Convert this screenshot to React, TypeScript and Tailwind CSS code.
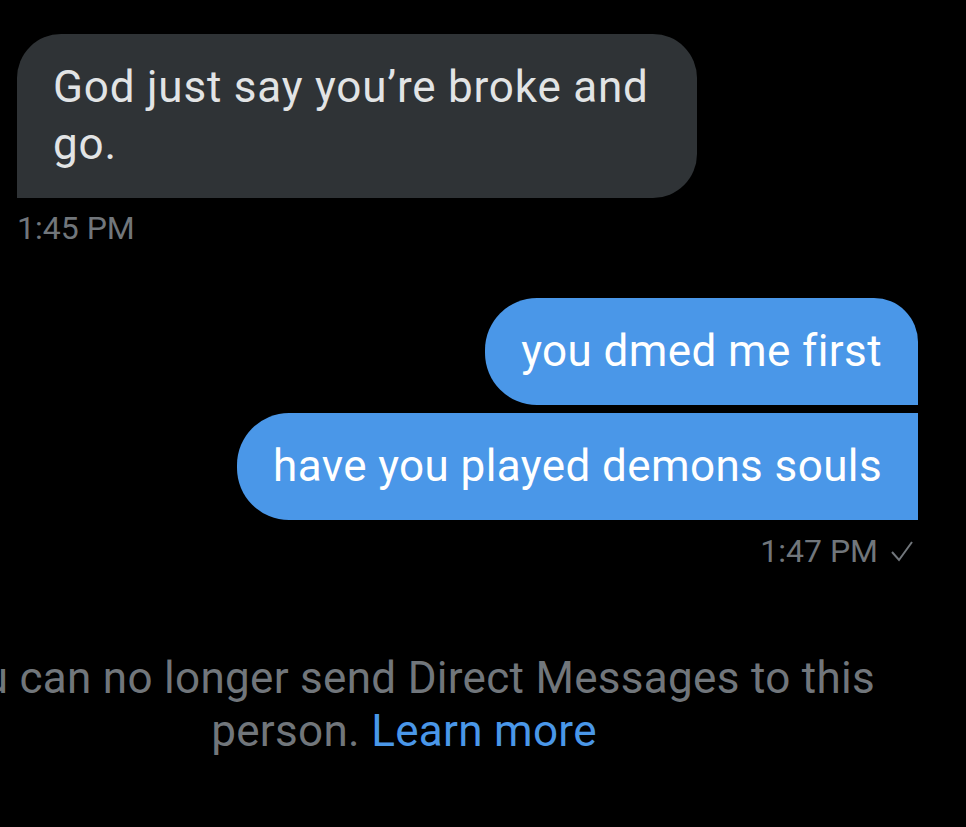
import React from "react";

export default function App() {
  const font = { fontFamily: "Roboto, 'Liberation Sans', sans-serif" };
  return (
    <div className="w-[966px] h-[827px] bg-black overflow-hidden flex flex-col" style={font}>
      <div className="pt-[34px] pl-[17px] flex flex-col items-start">
        <div className="w-[680px] bg-[#2f3336] rounded-t-[44px] rounded-br-[44px] px-[36px] py-[25px] text-[44px] leading-[57px] tracking-[0.8px] text-[#e2e4e5]">
          God just say you’re broke and
          <br />
          go.
        </div>
        <div className="mt-[11px] text-[32px] leading-[38px] text-[#71767b]">1:45 PM</div>
      </div>

      <div className="mt-[51px] pr-[48px] flex flex-col items-end gap-[8px]">
        <div className="bg-[#4a97e8] rounded-l-[52px] rounded-tr-[44px] px-[36px] py-[25px] text-[44px] leading-[57px] tracking-[0.4px] text-white">
          you dmed me first
        </div>
        <div className="bg-[#4a97e8] rounded-l-[52px] px-[36px] py-[25px] text-[44px] leading-[57px] tracking-[0.4px] text-white">
          have you played demons souls
        </div>
      </div>
      <div className="mt-[12px] pr-[52px] flex items-center justify-end gap-[12px] text-[32px] leading-[38px] text-[#71767b]">
        <span>1:47 PM</span>
        <svg width="24" height="22" viewBox="0 0 24 22" fill="none" stroke="#71767b" strokeWidth="2">
          <polyline points="2,12 9,20 22,2" />
        </svg>
      </div>

      <div className="mt-[82px] flex justify-center">
        <div className="ml-[-158px] w-[1000px] shrink-0 text-center text-[44px] leading-[53px] tracking-[0.3px] text-[#71767b]">
          You can no longer send Direct Messages to this
          <br />
          person. <span className="text-[#4a97e8]">Learn more</span>
        </div>
      </div>
    </div>
  );
}
